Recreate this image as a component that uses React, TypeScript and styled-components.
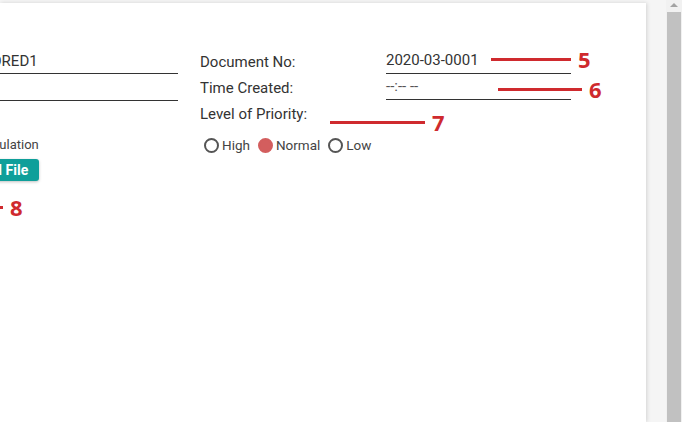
import React from 'react';
import styled, {createGlobalStyle} from 'styled-components';

const Global = createGlobalStyle`
  html, body {
    margin: 0;
    padding: 0;
    background: #f5f5f5;
    font-family: Roboto, "Liberation Sans", Arial, sans-serif;
    overflow: hidden;
  }
`

const Page = styled.div`
  display: flex;
  width: 682px;
  height: 422px;
  overflow: hidden;
`

const Main = styled.div`
  flex: 1;
  padding-top: 3px;
  padding-right: 20px;
`

const Card = styled.div`
  position: relative;
  height: 100%;
  background: #fff;
  box-shadow: 1px 0 4px rgba(0,0,0,0.14);
  overflow: hidden;
  display: flex;
  padding-top: 47px;
  box-sizing: border-box;
`

const LeftCol = styled.div`
  width: 242px;
  margin-left: -64px;
  display: flex;
  flex-direction: column;
`

const RightCol = styled.div`
  margin-left: 22px;
  display: flex;
  flex-direction: column;
`

const Input = styled.div`
  height: 24px;
  padding-left: 7px;
  border-bottom: 1px solid #333;
  font-size: 15px;
  color: #333;
  line-height: 22px;
  box-sizing: border-box;
  & + & { margin-top: 3px; }
`

const Row = styled.div<{$h: number}>`
  display: flex;
  align-items: flex-start;
  height: ${p => p.$h}px;
`

const Label = styled.div`
  width: 186px;
  font-size: 15px;
  color: #333;
  line-height: 25px;
`

const Field = styled.div<{$muted?: boolean}>`
  width: 185px;
  height: 24px;
  border-bottom: 1px solid #333;
  box-sizing: border-box;
  font-size: 15px;
  line-height: 21px;
  color: ${p => p.$muted ? '#555' : '#333'};
`

const Note = styled.div`
  margin-top: 36px;
  font-size: 13px;
  color: #444;
`

const Button = styled.div`
  margin-top: 7px;
  align-self: flex-start;
  background: #0f9f9a;
  color: #fff;
  font-weight: 700;
  font-size: 14px;
  line-height: 22px;
  padding: 0 11px 0 4px;
  border-radius: 3px;
  box-shadow: 0 1px 3px rgba(0,0,0,0.25);
`

const Marker = styled.div<{$left: number, $top: number, $len: number}>`
  position: absolute;
  left: ${p => p.$left}px;
  top: ${p => p.$top}px;
  display: flex;
  align-items: center;
  gap: 7px;
  color: #cf2a2e;
  font-family: "Open Sans", "DejaVu Sans", sans-serif;
  font-weight: 700;
  font-size: 22px;
  line-height: 22px;
  &::before {
    content: '';
    display: block;
    width: ${p => p.$len}px;
    height: 3px;
    background: #cf2a2e;
  }
`

const Radios = styled.div`
  display: flex;
  align-items: center;
  margin-top: 11px;
  margin-left: 4px;
  gap: 8px;
`

const Radio = styled.label<{$on?: boolean}>`
  display: flex;
  align-items: center;
  gap: 3px;
  font-size: 13.5px;
  color: #444;
  &::before {
    content: '';
    width: 11px;
    height: 11px;
    border-radius: 50%;
    border: 2px solid ${p => p.$on ? '#d35e5e' : '#555'};
    background: ${p => p.$on ? '#d35e5e' : 'transparent'};
  }
`

const Scrollbar = styled.div`
  width: 16px;
  background: #f1f1f1;
  display: flex;
  flex-direction: column;
  align-items: center;
`

const Arrow = styled.div`
  margin-top: 3px;
  width: 0;
  height: 0;
  border-left: 4px solid transparent;
  border-right: 4px solid transparent;
  border-bottom: 4px solid #a3a3a3;
`

const Thumb = styled.div`
  margin-top: 5px;
  width: 14px;
  flex: 1;
  background: #c1c1c1;
`

const App: React.FC = () => {
  return (
    <Page>
      <Global/>
      <Main>
        <Card>
          <LeftCol>
            <Input>SPONSORED1</Input>
            <Input/>
            <Note>Attach Regulation</Note>
            <Button>Add Excel File</Button>
          </LeftCol>
          <RightCol>
            <Row $h={26}>
              <Label>Document No:</Label>
              <Field>2020-03-0001</Field>
            </Row>
            <Row $h={26}>
              <Label>Time Created:</Label>
              <Field $muted>--:-- --</Field>
            </Row>
            <Row $h={24}>
              <Label>Level of Priority:</Label>
            </Row>
            <Radios>
              <Radio>High</Radio>
              <Radio $on>Normal</Radio>
              <Radio>Low</Radio>
            </Radios>
          </RightCol>
          <Marker $left={491} $top={45} $len={80}>5</Marker>
          <Marker $left={498} $top={75} $len={84}>6</Marker>
          <Marker $left={330} $top={108} $len={95}>7</Marker>
          <Marker $left={-2} $top={193} $len={5}>8</Marker>
        </Card>
      </Main>
      <Scrollbar>
        <Arrow/>
        <Thumb/>
      </Scrollbar>
    </Page>
  )
}

export default App;
